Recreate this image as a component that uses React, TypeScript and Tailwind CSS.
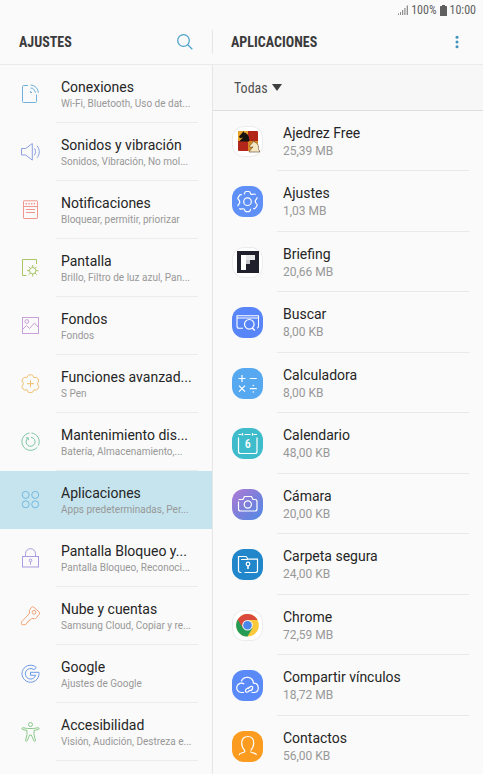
import type { ReactNode } from 'react';
import { clsx } from 'clsx';

type Setting = {
  title: string;
  detail: string;
  color: string;
  icon: ReactNode;
};

type InstalledApp = {
  name: string;
  size: string;
  background: string;
  icon: ReactNode;
};

const settings: Setting[] = [
  {
    title: 'Conexiones',
    detail: 'Wi-Fi, Bluetooth, Uso de dat...',
    color: 'text-[#6fb1dc]',
    icon: (
      <>
        <path d="M7 1.5H2.500a1 1 0 0 0-1 1v15a1 1 0 0 0 1 1h12a1 1 0 0 0 1-1V10.500" />
        <path d="M9.500 1a7.800 7.800 0 0 1 7.800 7.800M9.500 4a4.800 4.800 0 0 1 4.800 4.800" />
        <path d="M9.500 7v1.500H11" />
      </>
    ),
  },
  {
    title: 'Sonidos y vibración',
    detail: 'Sonidos, Vibración, No mol...',
    color: 'text-[#8c9fe0]',
    icon: (
      <>
        <path d="M.5 6.5h4.2L11.300 1.500v16.600L4.700 13H.5z" />
        <path d="M13.300 6.300c1.600 2 1.600 5 0 7M16 3.800c3 3.400 3 8.600 0 12" />
      </>
    ),
  },
  {
    title: 'Notificaciones',
    detail: 'Bloquear, permitir, priorizar',
    color: 'text-[#f0968c]',
    icon: (
      <>
        <rect x="2.5" y=".8" width="14" height="17.7" rx=".6" />
        <path d="M2.5 6.5h14M5 9.5h9M5 12.5h9" />
        <path d="M4.600 3.700h1.400M7.300 3.700h1.400M10 3.700h1.400M12.700 3.700h1.400" strokeWidth="1.5" />
      </>
    ),
  },
  {
    title: 'Pantalla',
    detail: 'Brillo, Filtro de luz azul, Pan...',
    color: 'text-[#a9c566]',
    icon: (
      <>
        <path d="M5.5 17.5h-4v-16h14V6" />
        <circle cx="11.7" cy="12.7" r="3.2" />
        <path d="M11.700 9.500V7M11.700 18.500V16M8.500 12.700H6M17.500 12.700H15M9.400 10.400 7.700 8.700M15.700 16.700 14 15M9.400 15l-1.700 1.700M15.700 8.700 14 10.400" />
      </>
    ),
  },
  {
    title: 'Fondos',
    detail: 'Fondos',
    color: 'text-[#c9a0d8]',
    icon: (
      <>
        <rect x="1.5" y="1.5" width="16" height="16" />
        <circle cx="5.8" cy="5.5" r="1.9" />
        <path d="m1.500 13.500 4-4 3 3 5-5.500 4 4.500" />
      </>
    ),
  },
  {
    title: 'Funciones avanzad...',
    detail: 'S Pen',
    color: 'text-[#f0bd6c]',
    icon: (
      <>
        <path d="M6.800 2.200Q7 .9 8.200.9h2.400q1.200 0 1.400 1.300.3 1.600 1.900 1.300 1.900-.6 2.700.8l1 1.700q.7 1.200-.5 2-1.300 1.700 0 3.400 1.200.8.5 2l-1 1.700q-.8 1.400-2.700.8-1.600-.3-1.900 1.300-.2 1.300-1.400 1.300H8.200q-1.200 0-1.400-1.300-.3-1.600-1.900-1.300-1.900.6-2.700-.8l-1-1.700q-.7-1.200.5-2 1.300-1.700 0-3.400-1.200-.8-.5-2l1-1.700q.8-1.400 2.700-.8 1.600.3 1.900-1.300z" />
        <path d="M9.500 6.200v7M6 9.700h7" />
      </>
    ),
  },
  {
    title: 'Mantenimiento dis...',
    detail: 'Batería, Almacenamiento,...',
    color: 'text-[#7cc5a6]',
    icon: (
      <>
        <path d="M8.500 1a8.700 8.700 0 1 0 7.800 14.200M17.300 13.500A8.700 8.700 0 0 0 10.500 1" />
        <path d="M6.700 6.300a4.500 4.500 0 1 0 3.300-1" />
        <path d="M4.800 5.800h2.500v2.500" />
      </>
    ),
  },
  {
    title: 'Aplicaciones',
    detail: 'Apps predeterminadas, Per...',
    color: 'text-[#72b9e2]',
    icon: (
      <>
        <circle cx="4.7" cy="4.9" r="3.5" />
        <circle cx="14.2" cy="4.9" r="3.5" />
        <circle cx="4.7" cy="14.3" r="3.5" />
        <circle cx="14.2" cy="14.3" r="3.5" />
      </>
    ),
  },
  {
    title: 'Pantalla Bloqueo y...',
    detail: 'Pantalla Bloqueo, Reconoci...',
    color: 'text-[#ab9be0]',
    icon: (
      <>
        <rect x="1.5" y="8.5" width="16" height="10.5" />
        <path d="M4.500 8.500V5.700a5 5 0 0 1 10 0v2.800" />
        <circle cx="9.5" cy="12.3" r="1.3" />
        <path d="M9.500 13.600v3" />
      </>
    ),
  },
  {
    title: 'Nube y cuentas',
    detail: 'Samsung Cloud, Copiar y re...',
    color: 'text-[#f2a478]',
    icon: (
      <>
        <path d="M10.500 1.200q1.200-.9 2.500.1l5 4.500q1.200 1.200.2 2.500l-2.800 3.600q-.8.900-2 .8l-2.600-.3-1.600 1.700-1.300.2-.2 1.500-1.500.3-.3 1.300-1.700 1.300H1.200q-.9-.1-.8-1.100l.2-1.800 8-8.500-.2-2.200q0-1 .7-1.700z" />
        <circle cx="13" cy="6.3" r="1.9" />
      </>
    ),
  },
  {
    title: 'Google',
    detail: 'Ajustes de Google',
    color: 'text-[#6c9ae8]',
    icon: (
      <path d="M15.300 3.500A8.500 8.500 0 1 0 18 9.700V8.300H9.500v3h5.200a5.300 5.300 0 1 1-1.700-5.600z" />
    ),
  },
  {
    title: 'Accesibilidad',
    detail: 'Visión, Audición, Destreza e...',
    color: 'text-[#8cc98a]',
    icon: (
      <>
        <circle cx="9.5" cy="2.5" r="2" />
        <path d="M1.700 5.700 6.500 6.500h6l4.800-.8q.9.100.8 1-.1.700-.8.800L13 8.500v4l1.500 6q0 .8-.7.900-.7 0-1-.7L10.300 13H8.700l-2.500 5.700q-.3.700-1 .7-.7-.1-.7-.9l1.500-6v-4l-4.300-1q-.7-.1-.8-.8-.1-.9.800-1z" />
      </>
    ),
  },
];

const apps: InstalledApp[] = [
  {
    name: 'Ajedrez Free',
    size: '25,39 MB',
    background: 'bg-white ring-1 ring-[#ececec] ring-inset',
    icon: (
      <g stroke="none">
        <rect x="6" y="5" width="20" height="20" rx="1" fill="#b3261a" />
        <path d="M6 5h10v10H6z" fill="#e9a22a" />
        <path d="M16 15h10v10H16z" fill="#d88a24" />
        <path d="M7.500 15.500h9.700c.3-4.500-.8-8-5.200-9L11.500 5l-1 1.500L7 10.500l1 1.800 3-.8-3 3z" fill="#19130f" />
        <path d="M17 26h10.500v-1.500l-1-.8c.6-4-1-7-4.200-7.700l-.8-1.500-.6 1.800-3.400 3.700 1 1.500 2.500-.7-2.500 3z" fill="#f4e7c2" stroke="#60401f" strokeWidth=".6" />
      </g>
    ),
  },
  {
    name: 'Ajustes',
    size: '1,03 MB',
    background: 'bg-[#5f90f8]',
    icon: (
      <>
        <circle cx="15.5" cy="15.7" r="3.8" />
        <path d="M11.800 8.300q.8-.5 1-1.500.2-1.300 1.300-1.300h2.800q1.100 0 1.300 1.300.4 2.200 2.700 1.500 2-.8 2.700.5M24.800 11.200q.6 1.200-.7 2.200-1.700 1.900 0 4 1.500 1.200.8 2.400l-1.200 2q-.8 1.300-2.500.6M19 22.800q-.6.600-.8 1.600-.2 1.300-1.300 1.300h-2.800q-1.100 0-1.300-1.300-.4-2.200-2.700-1.500-2 .8-2.700-.5M6.200 20.200q-.6-1.200.7-2.200 1.700-1.900 0-4-1.500-1.200-.8-2.400l1.200-2q.8-1.300 2.500-.7" />
      </>
    ),
  },
  {
    name: 'Briefing',
    size: '20,66 MB',
    background: 'bg-white ring-1 ring-[#ececec] ring-inset',
    icon: (
      <g stroke="none">
        <path d="M5 4h22v22H5z" fill="#1f202c" />
        <path d="M9 8h5v15H9z" fill="#fff" />
        <path d="M14 8h9v5h-9z" fill="#e7e7ea" />
        <path d="M14 13h4v4h-4z" fill="#c8c8cd" />
      </g>
    ),
  },
  {
    name: 'Buscar',
    size: '8,00 KB',
    background: 'bg-[#5885f7]',
    icon: (
      <>
        <path d="M11 21.300H7a2 2 0 0 1-2-2V8.800h21.500V19q0 1.800-1.500 2.300M5 11h21.500" strokeWidth="1.1" />
        <circle cx="17.300" cy="17.300" r="4.800" fill="#5885f7" />
        <path d="m20.300 21 2.500 2.500" strokeWidth="1.5" />
      </>
    ),
  },
  {
    name: 'Calculadora',
    size: '8,00 KB',
    background: 'bg-[#56a9f1]',
    icon: (
      <>
        <path d="M6.500 10.500h7M10 7v7M17.800 10.500h7M7 17.700l6 6M13 17.700l-6 6M17.800 20.700h7" />
        <circle cx="21.3" cy="17.5" r=".5" fill="#fff" strokeWidth=".5" />
        <circle cx="21.3" cy="23.9" r=".5" fill="#fff" strokeWidth=".5" />
      </>
    ),
  },
  {
    name: 'Calendario',
    size: '48,00 KB',
    background: 'bg-[#3fbccb]',
    icon: (
      <>
        <path d="M6.500 9.500v14a2 2 0 0 0 2 2h14.500a2 2 0 0 0 2-2v-14M6.500 6.500h3M12.500 6.500h6M21.500 6.500h3.500M10.500 5v2.500M20.500 5v2.500" />
        <text x="15.7" y="20.3" textAnchor="middle" fontSize="12" fontFamily="Roboto Condensed, Roboto, sans-serif" fontWeight="500" fill="#fff" stroke="none">
          6
        </text>
      </>
    ),
  },
  {
    name: 'Cámara',
    size: '20,00 KB',
    background: 'bg-linear-to-br from-[#b079d6] via-[#7b7fda] to-[#4b8be6]',
    icon: (
      <>
        <path d="M6.500 12.500V20a2 2 0 0 0 2 2h14.500a2 2 0 0 0 2-2v-7.500q0-2-2-2h-2L19.500 7.500h-7L11 10.500H6.500" />
        <circle cx="15.8" cy="15.5" r="3.6" />
      </>
    ),
  },
  {
    name: 'Carpeta segura',
    size: '24,00 KB',
    background: 'bg-[#2186ca]',
    icon: (
      <>
        <path d="M9.500 23.500H8.500a2 2 0 0 1-2-2V7.500h7.500l2 2.700h9.500v11.300a2 2 0 0 1-2 2H12.500M9 10.500h6.500" />
        <circle cx="16" cy="15" r="1.8" />
        <path d="M16 17v3" strokeWidth="1.6" />
      </>
    ),
  },
  {
    name: 'Chrome',
    size: '72,59 MB',
    background: 'bg-white ring-1 ring-[#ececec] ring-inset',
    icon: (
      <g stroke="none">
        <circle cx="15.5" cy="15.3" r="11.3" fill="#fbc93c" />
        <path d="M15.500 15.300 5.700 9.600a11.300 11.300 0 0 0 9.800 17l5-8.600z" fill="#259b56" />
        <path d="M5.700 9.600a11.300 11.300 0 0 1 19.600 0L25.500 10H15.500l-4.600 8z" fill="#d94a3c" />
        <circle cx="15.5" cy="15.3" r="5.3" fill="#f4f4f4" />
        <circle cx="15.5" cy="15.3" r="4.3" fill="#4b86ec" />
      </g>
    ),
  },
  {
    name: 'Compartir vínculos',
    size: '18,72 MB',
    background: 'bg-[#5a8af8]',
    icon: (
      <>
        <path d="M12 22.500H9.500a4.700 4.700 0 1 1 2.700-8.500M9.300 11.500a6.300 6.300 0 0 1 12.200 1.700 4.700 4.700 0 0 1 1 9.300h-3" />
        <path d="M17.300 20.500c-1.500 2.500-4.500 2-3.800-.2.600-1.800 3-3 4.300-2.500M16 19c1.500-3 5-3.500 4.700-1.200-.2 1.600-1.800 3-3.700 3" />
      </>
    ),
  },
  {
    name: 'Contactos',
    size: '56,00 KB',
    background: 'bg-[#fb9b20]',
    icon: (
      <path d="M7 24q.5-1.500 2.500-2l2.300-.7q1.200-.5.900-2-3-3-3-7.300c0-4 2.300-6.500 6-6.500s6 2.500 6 6.500q0 4.300-3 7.300M18.500 20.500q.3.700 1.300 1l2.200.6q2 .5 2.500 1.900" />
    ),
  },
];

function StatusBar() {
  return (
    <div className="flex h-5 shrink-0 items-center justify-end gap-[3px] pr-[7px] font-['Roboto_Condensed','Roboto',sans-serif] text-xs text-[#5f5f5f]">
      <svg width="10" height="10" viewBox="0 0 10 10" fill="currentColor" opacity=".7" aria-hidden="true">
        <path d="M0 8.500h1V10H0zM2 7h1v3H2zM4 5h1.200v5H4zM6.300 3h1.200v7H6.300zM8.700.5H10V10H8.700z" />
      </svg>
      <span>100%</span>
      <svg width="7" height="11" viewBox="0 0 7 11" fill="currentColor" aria-hidden="true">
        <path d="M2 0h3v1h1.500l.5.500V11H0V1.500L.5 1H2z" />
      </svg>
      <span>10:00</span>
    </div>
  );
}

function SettingRow({ setting, active }: { setting: Setting; active: boolean }) {
  return (
    <li className={clsx('h-[58px] shrink-0', active && 'bg-[#c5e4ee]')}>
      <a href="#" aria-current={active ? 'page' : undefined} className="flex h-full items-center pl-[21px]">
        <svg
          width="20"
          height="20"
          viewBox="0 0 20 20"
          fill="none"
          stroke="currentColor"
          className={clsx('mr-[15px] shrink-0', setting.color)}
          aria-hidden="true"
        >
          {setting.icon}
        </svg>
        <span
          className={clsx(
            'mr-[14px] flex h-full min-w-0 flex-1 flex-col justify-center border-b pt-[2px] pl-[5px] whitespace-nowrap',
            active ? 'border-transparent' : 'border-[#ececec]',
          )}
        >
          <span className="text-sm leading-[18px] text-[#252525]">{setting.title}</span>
          <span className="text-[10px] leading-[16px] text-[#989898]">{setting.detail}</span>
        </span>
      </a>
    </li>
  );
}

function AppRow({ app }: { app: InstalledApp }) {
  return (
    <li className="min-h-[60px] flex-1 even:min-h-[61px]">
      <a href="#" className="flex h-full items-center pl-[19px]">
        <span className={clsx('mr-[14px] size-[31px] shrink-0 rounded-[12px]', app.background)}>
          <svg width="31" height="31" viewBox="0 0 31 31" fill="none" stroke="#fff" strokeWidth="1.2" aria-hidden="true">
            {app.icon}
          </svg>
        </span>
        <span className="mr-[14px] flex h-full flex-1 flex-col justify-center border-b border-[#e9e9e9] pt-[2px] pl-[6px]">
          <span className="text-sm leading-[18px] text-[#252525]">{app.name}</span>
          <span className="text-xs leading-[18px] text-[#989898]">{app.size}</span>
        </span>
      </a>
    </li>
  );
}

function App() {
  return (
    <div className="flex h-screen flex-col overflow-hidden bg-[#fafafa] font-['Roboto',sans-serif]">
      <StatusBar />
      <div className="flex min-h-0 flex-1">
        <nav className="flex w-[212px] shrink-0 flex-col">
          <header className="flex h-[45px] shrink-0 items-center justify-between border-b border-[#ebebeb] pr-[18px] pl-[19px]">
            <h1 className="font-['Roboto_Condensed','Roboto',sans-serif] text-sm font-bold text-[#3b3b3b]">AJUSTES</h1>
            <button type="button" aria-label="Buscar" className="text-[#4fa3cb]">
              <svg width="18" height="18" viewBox="0 0 18 18" fill="none" stroke="currentColor" strokeWidth="1.3">
                <circle cx="7.5" cy="7.5" r="5.8" />
                <path d="m11.800 11.800 4.500 4.500" />
              </svg>
            </button>
          </header>
          <ul className="flex min-h-0 flex-1 flex-col overflow-hidden">
            {settings.map((setting) => (
              <SettingRow key={setting.title} setting={setting} active={setting.title === 'Aplicaciones'} />
            ))}
          </ul>
        </nav>
        <main className="flex min-w-0 flex-1 flex-col">
          <header className="flex h-[45px] shrink-0 items-center border-b border-[#ebebeb]">
            <span className="h-6 w-px bg-[#e6e6e6]" />
            <h2 className="flex-1 pl-[18px] font-['Roboto_Condensed','Roboto',sans-serif] text-sm font-bold text-[#3b3b3b]">
              APLICACIONES
            </h2>
            <button type="button" aria-label="Más opciones" className="mr-[18px] text-[#3f93bd]">
              <svg width="16" height="16" viewBox="0 0 16 16" fill="currentColor">
                <circle cx="8" cy="3.200" r="1.500" />
                <circle cx="8" cy="8" r="1.500" />
                <circle cx="8" cy="12.800" r="1.500" />
              </svg>
            </button>
          </header>
          <div className="flex min-h-0 flex-1 flex-col border-l border-[#e6e6e6]">
            <div className="flex h-[46px] shrink-0 items-center border-b border-[#dedede] bg-[#f7f7f7] pl-[21px] text-[#505050]">
              <select
                aria-label="Filtrar aplicaciones"
                className="w-[38px] appearance-none bg-transparent font-['Roboto_Condensed','Roboto',sans-serif] text-sm"
              >
                <option>Todas</option>
              </select>
              <svg width="10" height="7" viewBox="0 0 10 7" fill="#404040" aria-hidden="true">
                <path d="M0 0h10L5 7z" />
              </svg>
            </div>
            <ul className="flex min-h-0 flex-1 flex-col">
              {apps.map((app) => (
                <AppRow key={app.name} app={app} />
              ))}
            </ul>
          </div>
        </main>
      </div>
    </div>
  );
}

export default App;
